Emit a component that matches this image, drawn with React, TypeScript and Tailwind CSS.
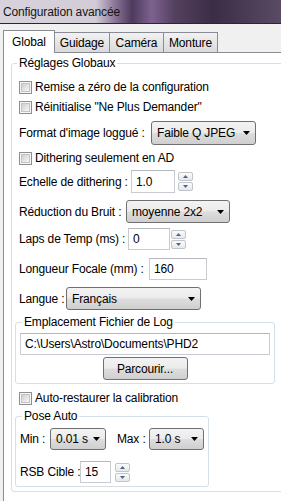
import React from "react";

const Check = ({ label, className = "" }: { label: string; className?: string }) => (
  <div className={`flex h-[20px] items-center ${className}`}>
    <div className="flex h-[13px] w-[13px] shrink-0 items-center justify-center border border-[#8e8f8f] bg-[#f6f6f6]">
      <div className="h-[9px] w-[9px] border border-[#c4c4c4] bg-gradient-to-br from-[#cfcfcf] to-[#f7f7f7]" />
    </div>
    <span className="ml-[3px]">{label}</span>
  </div>
);

const Arrow = () => (
  <svg width="7" height="4" viewBox="0 0 7 4" className="ml-auto shrink-0">
    <path d="M0 0h7L3.5 4z" fill="#000" />
  </svg>
);

const Combo = ({ value, className }: { value: string; className: string }) => (
  <div
    className={`flex shrink-0 items-center rounded-[3px] border border-[#707070] bg-[linear-gradient(180deg,#f3f3f3_0%,#ebebeb_48%,#dddddd_52%,#cfcfcf_100%)] pl-[5px] pr-[5px] ${className}`}
  >
    <span>{value}</span>
    <Arrow />
  </div>
);

const Field = ({ value, className }: { value: string; className: string }) => (
  <div className={`flex shrink-0 items-center border border-[#c8ccd2] border-t-[#b4b8be] bg-white pl-[4px] ${className}`}>
    {value}
  </div>
);

const Spin = ({ className = "" }: { className?: string }) => (
  <div className={`flex w-[15px] shrink-0 flex-col gap-[1px] ${className}`}>
    <div className="flex h-[9px] items-center justify-center rounded-[2px] border border-[#c0c5cc] bg-gradient-to-b from-[#fbfbfb] to-[#e6e8eb]">
      <svg width="5" height="3" viewBox="0 0 5 3">
        <path d="M0 3h5L2.5 0z" fill="#4f6482" />
      </svg>
    </div>
    <div className="flex h-[9px] items-center justify-center rounded-[2px] border border-[#c0c5cc] bg-gradient-to-b from-[#fbfbfb] to-[#e6e8eb]">
      <svg width="5" height="3" viewBox="0 0 5 3">
        <path d="M0 0h5L2.5 3z" fill="#4f6482" />
      </svg>
    </div>
  </div>
);

export default function App() {
  return (
    <div className="h-[501px] w-[281px] overflow-hidden whitespace-nowrap bg-[#f0f0f0] font-['Liberation_Sans',Arial,sans-serif] text-[12px] leading-[14px] tracking-[-0.15px] text-black">
      {/* title bar */}
      <div className="flex h-[23px] items-center bg-[linear-gradient(90deg,#d7d2db_0%,#d2ccd6_34%,#8a7596_41%,#4d3a5c_47%,#7d6290_54%,#54415f_62%,#3b2d46_76%,#5a4b65_100%)] pl-[3px] text-[#151515]">
        Configuration avancée
      </div>
      <div className="h-px bg-[#2b2630]" />

      <div className="flex h-[477px]">
        <div className="w-px bg-[#bdbdbd]" />
        <div className="w-px bg-[#5c5c5c]" />
        <div className="flex-1 pl-[3px] pt-[6px]">
          {/* tabs */}
          <div className="flex h-[22px] items-end">
            <div className="relative z-10 mb-[-1px] flex h-[23px] w-[52px] items-center justify-center border-x border-t border-[#898c95] bg-white">
              Global
            </div>
            <div className="flex h-[20px] w-[55px] items-center justify-center border-r border-t border-[#898c95] bg-gradient-to-b from-[#f2f2f2] to-[#dadada]">
              Guidage
            </div>
            <div className="flex h-[20px] w-[54px] items-center justify-center border-r border-t border-[#898c95] bg-gradient-to-b from-[#f2f2f2] to-[#dadada]">
              Caméra
            </div>
            <div className="flex h-[20px] w-[54px] items-center justify-center border-r border-t border-[#898c95] bg-gradient-to-b from-[#f2f2f2] to-[#dadada]">
              Monture
            </div>
          </div>

          {/* panel */}
          <div className="h-[460px] border-l border-t border-[#898c95] bg-white pt-[3px]">
            <fieldset className="ml-[7px] w-[300px] rounded-[3px] border border-[#d5dfe5] pb-[4px] pl-[7px]">
              <legend className="ml-[-2px] px-[2px] leading-[14px]">Réglages Globaux</legend>

              <Check label="Remise a zéro de la configuration" className="mt-[7px]" />
              <Check label={'Réinitialise "Ne Plus Demander"'} />

              <div className="mt-[4px] flex items-center">
                <span className="w-[132px] shrink-0">Format d'image loggué :</span>
                <Combo value="Faible Q JPEG" className="h-[24px] w-[105px]" />
              </div>

              <Check label="Dithering seulement en AD" className="mt-[3px]" />

              <div className="mt-[2px] flex items-center">
                <span className="w-[112px] shrink-0">Echelle de dithering :</span>
                <Field value="1.0" className="h-[23px] w-[44px]" />
                <Spin className="ml-[3px]" />
              </div>

              <div className="mt-[7px] flex items-center">
                <span className="w-[107px] shrink-0">Réduction du Bruit :</span>
                <Combo value="moyenne 2x2" className="h-[23px] w-[104px]" />
              </div>

              <div className="mt-[5px] flex items-center">
                <span className="w-[109px] shrink-0">Laps de Temp (ms) :</span>
                <Field value="0" className="h-[22px] w-[42px]" />
                <Spin className="ml-[1px]" />
              </div>

              <div className="mt-[8px] flex items-center">
                <span className="w-[130px] shrink-0">Longueur Focale (mm) :</span>
                <Field value="160" className="h-[22px] w-[58px]" />
              </div>

              <div className="mt-[7px] flex items-center">
                <span className="w-[47px] shrink-0">Langue :</span>
                <Combo value="Français" className="h-[23px] w-[135px]" />
              </div>

              <fieldset className="ml-[-4px] mt-[5px] flex w-[260px] flex-col rounded-[3px] border border-[#d5dfe5] px-[4px] pb-[3px]">
                <legend className="ml-[2px] px-[2px] leading-[14px]">Emplacement Fichier de Log</legend>
                <Field value={"C:\\Users\\Astro\\Documents\\PHD2"} className="mt-[4px] h-[22px] w-[250px]" />
                <div className="mt-[2px] flex h-[23px] w-[85px] items-center justify-center self-center rounded-[3px] border border-[#707070] bg-[linear-gradient(180deg,#f3f3f3_0%,#ebebeb_48%,#dddddd_52%,#cfcfcf_100%)]">
                  Parcourir...
                </div>
              </fieldset>

              <Check label="Auto-restaurer la calibration" className="mt-[4px]" />

              <fieldset className="ml-[-4px] mt-[1px] w-[194px] rounded-[3px] border border-[#d5dfe5] pb-[3px] pl-[4px]">
                <legend className="ml-[2px] px-[2px] leading-[14px]">Pose Auto</legend>
                <div className="mt-[5px] flex items-center">
                  <span className="w-[30px] shrink-0">Min :</span>
                  <Combo value="0.01 s" className="h-[22px] w-[56px]" />
                  <span className="ml-[11px] w-[32px] shrink-0">Max :</span>
                  <Combo value="1.0 s" className="h-[22px] w-[55px]" />
                </div>
                <div className="mt-[11px] flex items-center">
                  <span className="w-[60px] shrink-0">RSB Cible :</span>
                  <Field value="15" className="h-[22px] w-[31px]" />
                  <Spin className="ml-[4px]" />
                </div>
              </fieldset>
            </fieldset>
          </div>
        </div>
      </div>
    </div>
  );
}
